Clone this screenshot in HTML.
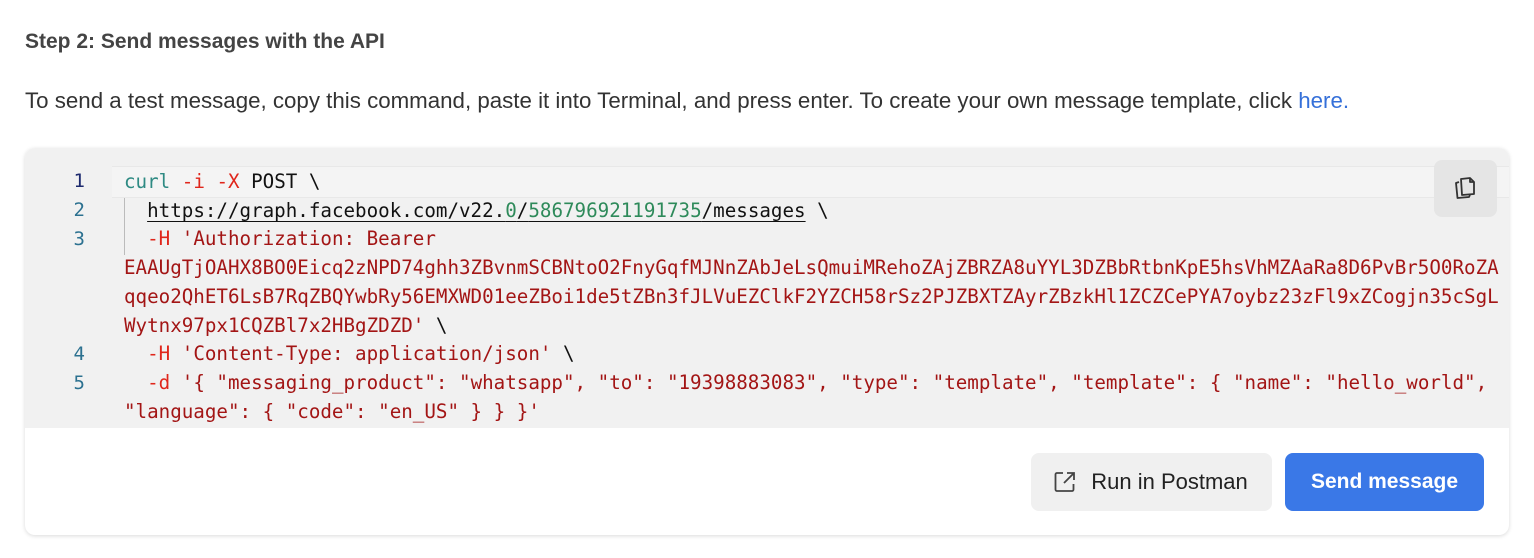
<!DOCTYPE html>
<html><head><meta charset="utf-8"><style>
body{margin:0;width:1534px;height:558px;background:#fff;font-family:"Liberation Sans",sans-serif;position:relative;overflow:hidden}
h2{position:absolute;left:25px;top:30px;margin:0;font-size:21px;font-weight:bold;color:#444}
p{position:absolute;left:25px;top:88px;margin:0;font-size:22.3px;color:#333;white-space:nowrap}
p a{color:#3570d9;text-decoration:none}
.card{position:absolute;left:25px;top:148px;width:1484px;height:387px;border-radius:10px;background:#fff;box-shadow:0 1px 4px rgba(0,0,0,.15);overflow:hidden}
.code{position:absolute;left:0;top:0;width:1484px;height:280px;background:#f1f1f1}
.hl{position:absolute;left:87px;top:18px;width:1397px;height:30px;background:#f4f4f4;border-top:1px solid #e8e8e8;border-bottom:1px solid #e8e8e8}
.guide{position:absolute;left:99px;top:50px;width:1px;height:57px;background:#bbb}
.ln{position:absolute;left:40px;width:20px;text-align:right;font-family:"DejaVu Sans Mono",monospace;font-size:19px;color:#2c7190}
.src{position:absolute;left:99px;top:20px;font-family:"DejaVu Sans Mono",monospace;font-size:19.2px;line-height:28.7px;white-space:pre;color:#a31515}
.t{color:#2e8a83}.r{color:#e0261b}.k{color:#111}.g{color:#2e8a5a}.u{color:#111;text-decoration:underline;text-underline-offset:4px}
.copy{position:absolute;left:1409px;top:12px;width:63px;height:57px;border-radius:8px;background:#e5e5e5}
.btn{position:absolute;top:305px;height:58px;border-radius:8px;font-size:22px;line-height:58px;text-align:center}
.b1{left:1006px;width:241px;background:#f0f0f0;color:#222}
.b2{left:1260px;width:199px;background:#3a78e7;color:#fff;font-weight:bold;font-size:21px}
</style></head><body>
<h2>Step 2: Send messages with the API</h2>
<p>To send a test message, copy this command, paste it into Terminal, and press enter. To create your own message template, click <a>here.</a></p>
<div class="card">
<div class="code">
<div class="hl"></div>
<div class="guide"></div>
<div class="ln" style="top:22px;color:#1d2a6e">1</div>
<div class="ln" style="top:51px">2</div>
<div class="ln" style="top:80px">3</div>
<div class="ln" style="top:195px">4</div>
<div class="ln" style="top:224px">5</div>
<div class="src"><span class="t">curl</span> <span class="r">-i</span> <span class="r">-X</span> <span class="k">POST \</span>
  <span class="u">https://graph.facebook.com/v22.<span class="g">0</span>/<span class="g">586796921191735</span>/messages</span><span class="k"> \</span>
  <span class="r">-H</span> 'Authorization: Bearer
EAAUgTjOAHX8BO0Eicq2zNPD74ghh3ZBvnmSCBNtoO2FnyGqfMJNnZAbJeLsQmuiMRehoZAjZBRZA8uYYL3DZBbRtbnKpE5hsVhMZAaRa8D6PvBr5O0RoZA
qqeo2QhET6LsB7RqZBQYwbRy56EMXWD01eeZBoi1de5tZBn3fJLVuEZClkF2YZCH58rSz2PJZBXTZAyrZBzkHl1ZCZCePYA7oybz23zFl9xZCogjn35cSgL
Wytnx97px1CQZBl7x2HBgZDZD'<span class="k"> \</span>
  <span class="r">-H</span> 'Content-Type: application/json'<span class="k"> \</span>
  <span class="r">-d</span> '{ "messaging_product": "whatsapp", "to": "19398883083", "type": "template", "template": { "name": "hello_world",
"language": { "code": "en_US" } } }'</div>
<div class="copy"><svg width="63" height="57" viewBox="0 0 63 57"><g fill="none" stroke="#333" stroke-width="1.8" stroke-linejoin="round"><path d="M25 22 L22 23 L23.5 38 L35 37 L36 35"/><path d="M27 19 L36 18 L40 22 L40 34 L28 35 Z"/><path d="M36 18 L36 22 L40 22"/></g></svg></div>
</div>
<div class="btn b1"><svg style="position:absolute;left:22px;top:17px" width="24" height="24" viewBox="0 0 24 24"><g fill="none" stroke="#444" stroke-width="1.8"><path d="M10 3H4a1.5 1.5 0 0 0-1.5 1.5v15A1.5 1.5 0 0 0 4 21h15a1.5 1.5 0 0 0 1.5-1.5V14"/><path d="M14 3h7v7M21 3l-10 10"/></g></svg><span style="padding-left:36px">Run in Postman</span></div>
<div class="btn b2">Send message</div>
</div>
</body></html>
